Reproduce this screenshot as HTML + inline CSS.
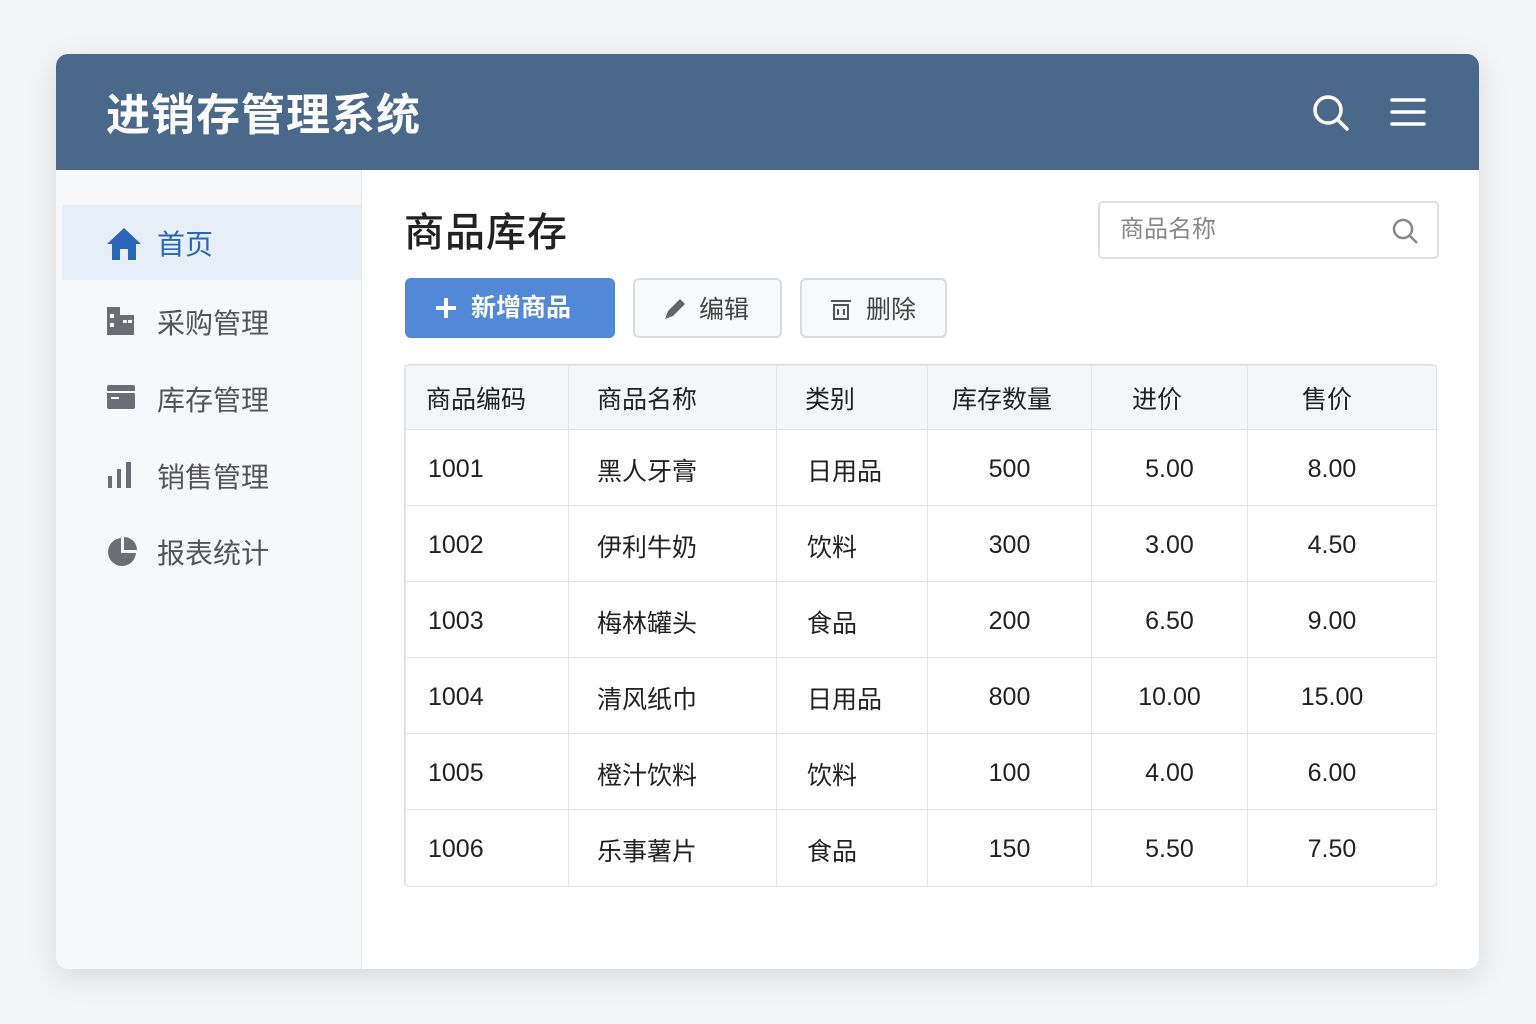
<!DOCTYPE html><html><head><meta charset="utf-8"><style>
body{margin:0;width:1536px;height:1024px;background:#f4f5f7;font-family:"Liberation Sans","Noto Sans CJK SC",sans-serif;position:relative;overflow:hidden}
.card{position:absolute;left:56px;top:54px;width:1423px;height:915px;background:#fff;border-radius:12px;box-shadow:0 8px 30px rgba(0,0,0,.12);overflow:hidden}
.hd{position:absolute;left:0;top:0;width:100%;height:116px;background:#4a6889}
.hd h1{position:absolute;left:50px;top:36px;margin:0;font-size:44px;color:#fff;font-weight:700;letter-spacing:1px;line-height:52px}
.sb{position:absolute;left:0;top:116px;width:305px;bottom:0;background:#f7f8fa;border-right:1px solid #e3e5e8}
.it{position:absolute;left:6px;width:299px;height:75px;font-size:28px;color:#555;line-height:75px}
.it span{position:absolute;left:95px;top:2px}
.it svg{position:absolute;left:44px;top:22px}
.act{background:#e6eef8;color:#2a66b8}
.t{position:absolute;font-size:40px;font-weight:500;color:#222;left:348px;top:146px;letter-spacing:1px}
.search{position:absolute;left:1042px;top:147px;width:337px;height:54px;border:2px solid #dcdfe3;border-radius:5px;font-size:24px;color:#888;line-height:54px;text-indent:20px}
.btn{position:absolute;top:224px;height:60px;border-radius:6px;font-size:25px;line-height:60px;box-sizing:border-box}
table{position:absolute;left:349px;top:311px;width:1031px;border-collapse:collapse;font-size:25px;color:#222;table-layout:fixed}
.tw{position:absolute;left:348px;top:310px;width:1031px;height:521px;border:1.5px solid #dcdfe3;border-radius:6px;overflow:hidden}
td,th{border:1.5px solid #e2e4e7;height:76px;padding:0;box-sizing:border-box}
th{height:64px;background:#f5f6f7;font-weight:400;text-align:left;padding-left:20px}
td{padding-left:22px;padding-top:4px}
td:nth-child(n+4){text-align:center;padding-left:0}
td:nth-child(6){padding-right:20px}
tr:last-child td{border-bottom:none}
</style></head><body>
<div class="card">
<div class="hd"><h1>进销存管理系统</h1>
<svg style="position:absolute;left:1256px;top:40px" width="38" height="38" viewBox="0 0 38 38"><circle cx="16" cy="16" r="13" fill="none" stroke="#fff" stroke-width="3.5"/><path d="M26 26l9 9" stroke="#fff" stroke-width="3.5" stroke-linecap="round"/></svg>
<svg style="position:absolute;left:1334px;top:43px" width="36" height="30"><path d="M2 3h32M2 15h32M2 27h32" stroke="#fff" stroke-width="3.5" stroke-linecap="round"/></svg>
</div>
<div class="sb">
<div class="it act" style="top:35px"><svg width="36" height="34" viewBox="0 0 36 34"><path d="M18 1L1 17h5v16h8V22h8v11h8V17h5z" fill="#2a66b8"/></svg><span>首页</span></div>
<div class="it" style="top:114px"><svg width="30" height="30"><path d="M1 1h13v28H1zM14 9h14v20H14z" fill="#6b6f75"/><rect x="4" y="8" width="4" height="4" fill="#fff"/><rect x="4" y="17" width="4" height="4" fill="#fff"/><rect x="17" y="14" width="4" height="3" fill="#fff"/><rect x="22" y="14" width="4" height="3" fill="#fff"/></svg><span>采购管理</span></div>
<div class="it" style="top:191px"><svg width="30" height="28"><rect x="1" y="2" width="28" height="24" rx="2" fill="#6b6f75"/><path d="M1 9h28" stroke="#fff" stroke-width="2"/><rect x="5" y="14" width="8" height="2" fill="#fff"/></svg><span>库存管理</span></div>
<div class="it" style="top:268px"><svg width="30" height="30"><rect x="2" y="16" width="4" height="12" fill="#6b6f75"/><rect x="11" y="9" width="4" height="19" fill="#6b6f75"/><rect x="20" y="2" width="5" height="26" fill="#6b6f75"/></svg><span>销售管理</span></div>
<div class="it" style="top:344px"><svg width="32" height="32"><path d="M15 2A14 14 0 1 0 30 17H15z" fill="#6b6f75"/><path d="M18 1v13h13A13 13 0 0 0 18 1z" fill="#6b6f75"/></svg><span>报表统计</span></div>
</div>
<div class="t">商品库存</div>
<div class="search">商品名称<svg style="position:absolute;right:18px;top:14px" width="28" height="28"><circle cx="12" cy="12" r="9" fill="none" stroke="#888" stroke-width="2.5"/><path d="M19 19l7 7" stroke="#888" stroke-width="2.5"/></svg></div>
<div class="btn" style="left:349px;width:210px;background:#5288d8;color:#fff;font-weight:700;padding-left:66px">新增商品<svg style="position:absolute;left:30px;top:19px" width="22" height="22"><path d="M11 1v20M1 11h20" stroke="#fff" stroke-width="4"/></svg></div>
<div class="btn" style="left:577px;width:149px;border:2px solid #d8dbdf;background:#f8f9fa;color:#444;padding-left:64px">编辑<svg style="position:absolute;left:28px;top:17px" width="24" height="24"><path d="M2 22l3-8L17 2l5 5L10 19z" fill="#666"/></svg></div>
<div class="btn" style="left:744px;width:147px;border:2px solid #d8dbdf;background:#f8f9fa;color:#444;padding-left:64px">删除<svg style="position:absolute;left:28px;top:19px" width="22" height="22"><path d="M1 2h20M4 6h14v14H4zM8 10v6M14 10v6" stroke="#555" stroke-width="2" fill="none"/></svg></div>
<div class="tw"></div>
<table>
<colgroup><col style="width:163px"><col style="width:208px"><col style="width:151px"><col style="width:164px"><col style="width:156px"><col style="width:189px"></colgroup>
<tr><th>商品编码</th><th style="padding-left:28px">商品名称</th><th style="padding-left:28px">类别</th><th style="padding-left:24px">库存数量</th><th style="padding-left:40px">进价</th><th style="padding-left:54px">售价</th></tr>
<tr><td>1001</td><td style="padding-left:28px">黑人牙膏</td><td style="padding-left:30px">日用品</td><td>500</td><td>5.00</td><td>8.00</td></tr>
<tr><td>1002</td><td style="padding-left:28px">伊利牛奶</td><td style="padding-left:30px">饮料</td><td>300</td><td>3.00</td><td>4.50</td></tr>
<tr><td>1003</td><td style="padding-left:28px">梅林罐头</td><td style="padding-left:30px">食品</td><td>200</td><td>6.50</td><td>9.00</td></tr>
<tr><td>1004</td><td style="padding-left:28px">清风纸巾</td><td style="padding-left:30px">日用品</td><td>800</td><td>10.00</td><td>15.00</td></tr>
<tr><td>1005</td><td style="padding-left:28px">橙汁饮料</td><td style="padding-left:30px">饮料</td><td>100</td><td>4.00</td><td>6.00</td></tr>
<tr><td>1006</td><td style="padding-left:28px">乐事薯片</td><td style="padding-left:30px">食品</td><td>150</td><td>5.50</td><td>7.50</td></tr>
</table>
</div>
</body></html>
